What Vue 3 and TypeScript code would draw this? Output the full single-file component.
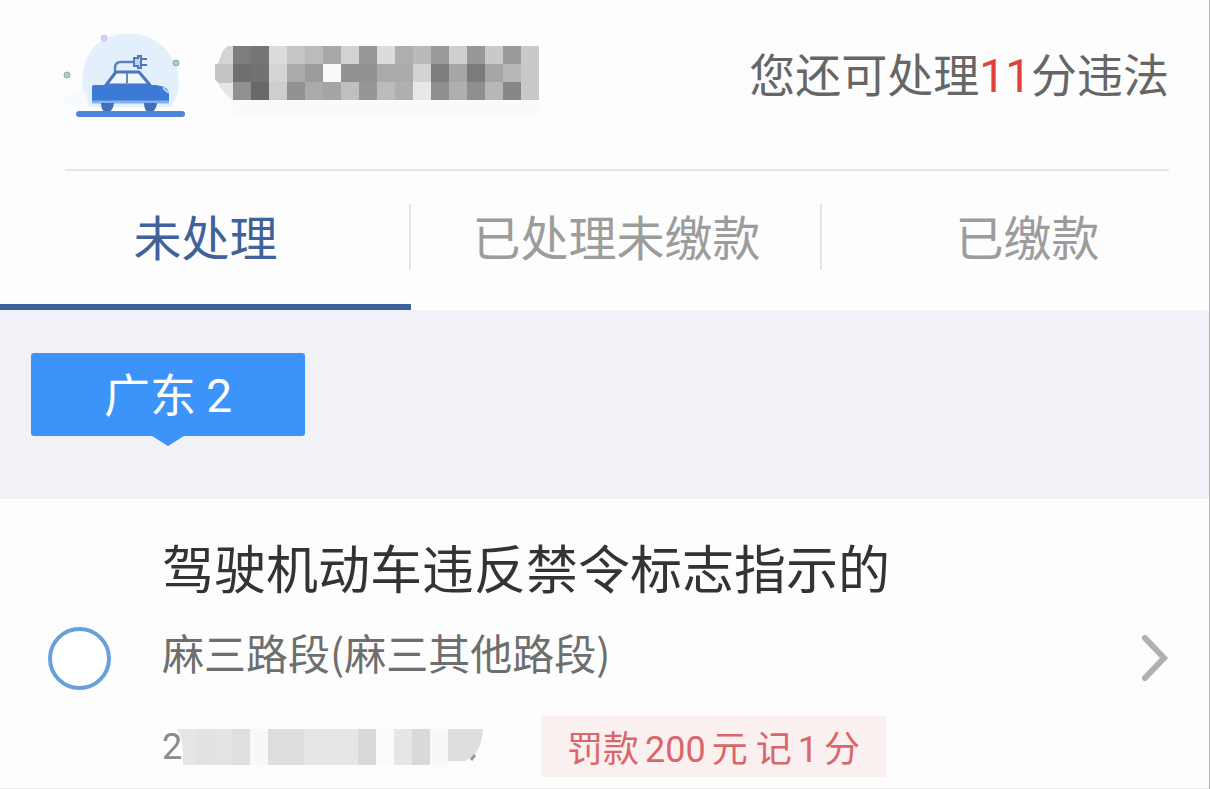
<script setup lang="ts">
import { ref } from 'vue'

interface Tab {
  id: string
  label: string
}

interface Block {
  x: number
  width: number
  fill: string
}

const tabs: Tab[] = [
  { id: 'pending', label: '未处理' },
  { id: 'unpaid', label: '已处理未缴款' },
  { id: 'paid', label: '已缴款' },
]
const activeTab = ref<string>('pending')
const selected = ref<boolean>(false)

const cell = 18
const plateRows: string[][] = [
  ['#7d7d7d', '#757575', '#dcdcdc', '#c6c6c6', '#bbbbbb', '#a8a8a8', '#d2d2d2', '#989898', '#dcdcdc', '#aeaeae', '#bababa', '#999999', '#cfcfcf', '#979797', '#c9c9c9', '#9a9a9a', '#c9c9c9'],
  ['#707070', '#727272', '#d4d4d4', '#ababab', '#9b9b9b', '#f9f9f9', '#929292', '#929292', '#aaaaaa', '#aaaaaa', '#d3d3d3', '#7e7e7e', '#a6a6a6', '#7b7b7b', '#a6a6a6', '#b8b8b8', '#c9c9c9'],
  ['#909090', '#696969', '#cecece', '#929292', '#ababab', '#a5a5a5', '#bfbfbf', '#969696', '#bbbbbb', '#afafaf', '#e8e8e8', '#8f8f8f', '#afafaf', '#8f8f8f', '#b7b7b7', '#878787', '#c9c9c9'],
]

const dateBlocks: Block[] = [
  { x: 34, width: 18, fill: '#e2e2e2' },
  { x: 52, width: 18, fill: '#e4e4e4' },
  { x: 70, width: 18, fill: '#dfdfdf' },
  { x: 88, width: 18, fill: '#f8f8f8' },
  { x: 106, width: 36, fill: '#dedede' },
  { x: 142, width: 54, fill: '#e6e6e6' },
  { x: 196, width: 18, fill: '#d9d9d9' },
  { x: 214, width: 18, fill: '#fbfbfb' },
  { x: 232, width: 18, fill: '#e6e6e6' },
  { x: 250, width: 18, fill: '#d9d9d9' },
  { x: 268, width: 18, fill: '#f8f8f8' },
]
</script>

<template>
  <main class="page">
    <header class="summary">
      <div class="vehicle">
        <svg class="car" width="128" height="96" viewBox="0 0 128 96" aria-hidden="true">
          <path d="M31 79C22 66 21 38 35 20C49 4 78 1 96 12C114 23 124 43 120 62C119 70 116 75 113 79Z" fill="#e3f0fb" />
          <path d="M4 72Q16 60 28 64L31 79H14Z" fill="#f6fafe" />
          <circle cx="46" cy="10" r="3" fill="#d5d3f3" stroke="#c3c3ea" />
          <circle cx="9" cy="47" r="3" fill="#a8cfcf" stroke="#86aaae" />
          <circle cx="118" cy="35" r="3" fill="#a8cfcf" stroke="#86aaae" />
          <path d="M57 45V40Q57 34 63 34H75" fill="none" stroke="#5d82bd" stroke-width="2.5" />
          <path d="M76 30H80V28H83V40H80V38H76Z" fill="#b9d5fa" stroke="#5478b8" stroke-width="2" />
          <path d="M84 31H89M84 37H89" stroke="#5478b8" stroke-width="2" />
          <path d="M48 57L58 44H81L92 57Z" fill="#f0f7fe" stroke="#4777c0" stroke-width="3" stroke-linejoin="round" />
          <path d="M69 45V57" stroke="#6b8aaf" stroke-width="2" />
          <path d="M36 57H98Q111 59 111 65V74H34V59Q34 57 36 57Z" fill="#3b7bd5" />
          <path d="M34 74H111" stroke="#82b2f2" stroke-width="3" />
          <path d="M106 58V61L111 65" fill="none" stroke="#b5d2fa" stroke-width="2" />
          <path d="M43 75H56Q55 84 49 84T43 75ZM86 75H99Q98 84 92 84T86 75Z" fill="#3f6fb9" />
          <path d="M21 86H124" stroke="#4c86d9" stroke-width="6" stroke-linecap="round" />
        </svg>
        <svg class="plate" width="324" height="72" viewBox="0 0 324 72" shape-rendering="crispEdges" aria-hidden="true">
          <path d="M18 0V18H3Q7 4 12 0Z" fill="#d4d4d4" />
          <path d="M0 18H18V37H3L0 34Z" fill="#c4c4c4" />
          <path d="M3 37H18V54Q8 48 3 37Z" fill="#e6e6e6" />
          <template v-for="(row, r) in plateRows" :key="r">
            <rect
              v-for="(fill, c) in row"
              :key="c"
              :x="(c + 1) * cell"
              :y="r * cell"
              :width="cell"
              :height="cell"
              :fill="fill"
            />
          </template>
          <rect x="18" y="55" width="306" height="14" fill="#fafafa" />
        </svg>
      </div>
      <p class="quota">您还可处理<strong class="num">11</strong>分违法</p>
    </header>

    <nav class="tabs">
      <button
        v-for="tab in tabs"
        :key="tab.id"
        type="button"
        class="tab"
        :class="{ active: tab.id === activeTab }"
        @click="activeTab = tab.id"
      >
        {{ tab.label }}
      </button>
    </nav>

    <section class="region">
      <h2 class="region-tag">广东 <span class="num">2</span></h2>
    </section>

    <article class="violation">
      <input v-model="selected" class="pick" type="checkbox" aria-labelledby="violation-title" />
      <div class="detail">
        <h3 id="violation-title" class="title">驾驶机动车违反禁令标志指示的</h3>
        <p class="place">麻三路段(麻三其他路段)</p>
        <div class="meta">
          <div class="date">
            <span class="num">2</span>
            <svg class="date-mask" width="324" height="36" viewBox="0 0 324 36" aria-hidden="true">
              <path d="M15 0H34V36H21V22L19 8Z" fill="#e6e6e6" />
              <rect
                v-for="block in dateBlocks"
                :key="block.x"
                :x="block.x"
                y="0"
                :width="block.width"
                height="36"
                :fill="block.fill"
              />
              <path d="M286 0H321Q320 18 312 26L304 32H286Z" fill="#dedede" />
              <path d="M309 31L313 26" stroke="#999999" stroke-width="3" />
            </svg>
          </div>
          <p class="penalty">罚款<span class="num amount">200</span>元 记<span class="num amount">1</span>分</p>
        </div>
      </div>
      <button type="button" class="open" aria-labelledby="violation-title">
        <svg width="28" height="50" viewBox="0 0 28 50" aria-hidden="true">
          <path d="M4 5L23 25L4 45" fill="none" stroke="#b0b0b0" stroke-width="6" stroke-linecap="round" />
        </svg>
      </button>
    </article>
  </main>
</template>

<style>
body {
  margin: 0;
  background: #fdfdfd;
}
</style>

<style scoped>
.page {
  box-sizing: border-box;
  overflow: hidden;
  border-right: 1px solid #b4b4b4;
  background: #fdfdfd;
  font-family: "Noto Sans CJK SC", sans-serif;
  font-weight: 400;
}

p,
h2,
h3 {
  margin: 0;
  font-weight: 400;
}

.num {
  font-family: Roboto, "Noto Sans CJK SC", sans-serif;
  font-weight: 400;
  line-height: 1;
}

.summary {
  display: flex;
  align-items: flex-start;
  justify-content: space-between;
  box-sizing: border-box;
  height: 171px;
  margin: 0 40px 0 65px;
  padding-top: 28px;
  border-bottom: 2px solid #e6e6e6;
}

.vehicle {
  display: flex;
  align-items: flex-start;
  margin-left: -7px;
}

.car {
  flex: none;
}

.plate {
  flex: none;
  margin: 18px 0 0 29px;
}

.quota {
  color: #666666;
  font-size: 46px;
  line-height: 88px;
  white-space: nowrap;
}

.quota .num {
  color: #e0413c;
}

.tabs {
  display: flex;
  height: 139px;
}

.tab {
  position: relative;
  flex: 0 0 34%;
  padding: 0 0 6px;
  border: 0;
  border-bottom: 6px solid transparent;
  background: none;
  color: #9c9c9c;
  font: inherit;
  font-size: 48px;
  line-height: 64px;
  white-space: nowrap;
  cursor: pointer;
}

.tab.active {
  border-bottom-color: #40619a;
  color: #40619a;
}

.tab:not(:last-child)::after {
  position: absolute;
  top: 33px;
  right: 0;
  width: 2px;
  height: 66px;
  background: #e4e4e4;
  content: "";
}

.region {
  padding: 43px 31px 63px;
  background: #f1f2f7;
}

.region-tag {
  position: relative;
  width: fit-content;
  padding: 0 73px 5px;
  border-radius: 3px;
  background: #3c94fb;
  color: #ffffff;
  font-size: 46px;
  line-height: 78px;
}

.region-tag::after {
  position: absolute;
  top: 100%;
  left: 50%;
  border: 16px solid transparent;
  border-top: 10px solid #3c94fb;
  border-bottom: 0;
  transform: translateX(-50%);
  content: "";
}

.violation {
  display: flex;
  align-items: center;
  padding: 40px 40px 11px 48px;
  border-bottom: 1px solid #ececec;
}

.pick {
  flex: none;
  box-sizing: border-box;
  width: 63px;
  height: 63px;
  margin: 0;
  border: 4px solid #68a0dc;
  border-radius: 50%;
  appearance: none;
  background: #ffffff;
}

.pick:checked {
  background: #68a0dc;
}

.detail {
  flex: 1;
  min-width: 0;
  margin-left: 51px;
}

.title {
  color: #333333;
  font-size: 52px;
  line-height: 56px;
  white-space: nowrap;
}

.place {
  margin-top: 31px;
  color: #6e6e6e;
  font-size: 42px;
  line-height: 52px;
  white-space: nowrap;
}

.meta {
  display: flex;
  align-items: center;
  gap: 55px;
  margin-top: 38px;
}

.date {
  position: relative;
  color: #8c8c8c;
  font-size: 36px;
  line-height: 36px;
}

.date .num {
  position: absolute;
  top: 0;
  left: 0;
}

.date-mask {
  display: block;
  position: relative;
}

.penalty {
  padding: 0 26px;
  background: #fbf0f0;
  color: #d9666a;
  font-size: 36px;
  line-height: 61px;
  white-space: nowrap;
}

.amount {
  margin: 0 6px;
}

.open {
  display: flex;
  flex: none;
  padding: 0;
  border: 0;
  background: none;
  cursor: pointer;
}
</style>
